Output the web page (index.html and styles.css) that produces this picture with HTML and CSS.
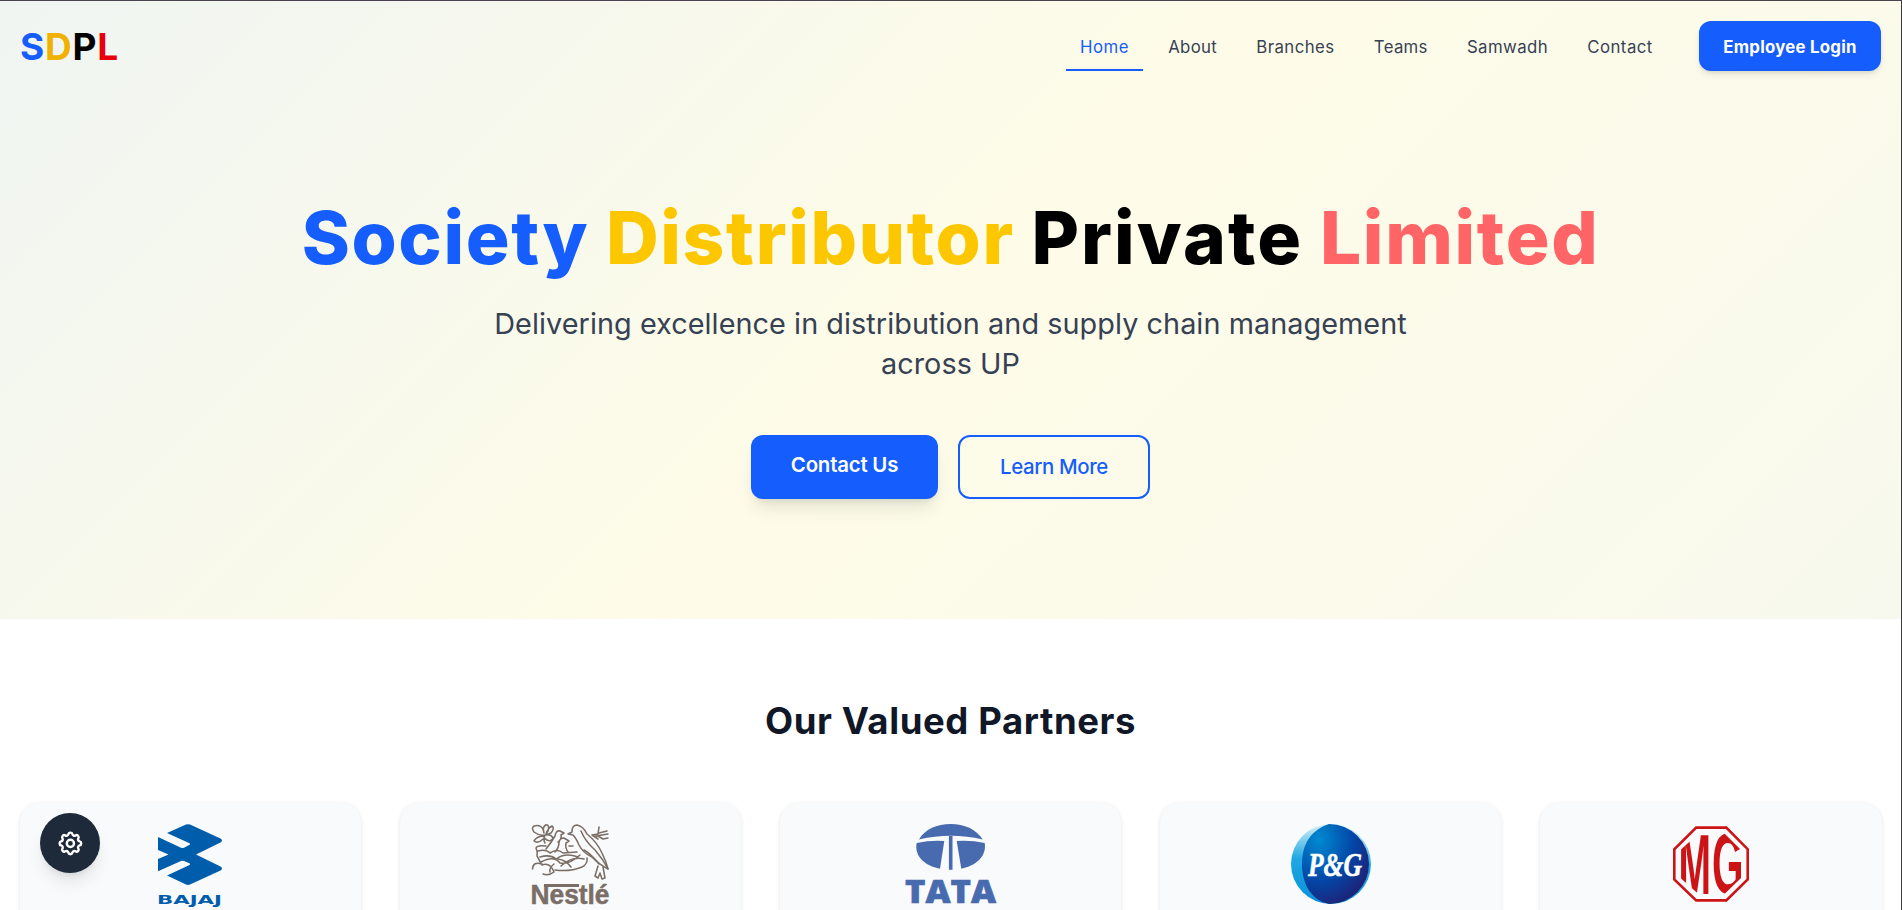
FILE: index.html
```html
<!DOCTYPE html>
<html lang="en">
<head>
<meta charset="utf-8">
<title>SDPL</title>
<link rel="stylesheet" href="styles.css">
</head>
<body>
<div class="page">
  <div class="hero">
    <header class="header">
      <a class="logo"><span class="blue">S</span><span class="gold">D</span><span class="black">P</span><span class="red">L</span></a>
      <nav class="nav">
        <a class="link home active">Home</a>
        <a class="link about">About</a>
        <a class="link branches">Branches</a>
        <a class="link teams">Teams</a>
        <a class="link samwadh">Samwadh</a>
        <a class="link contact">Contact</a>
        <a class="login">Employee Login</a>
      </nav>
    </header>
    <section class="intro">
      <h1 class="title"><span class="blue">Society</span> <span class="yellow">Distributor</span> <span class="black private">Private</span> <span class="coral">Limited</span></h1>
      <p class="tagline">Delivering excellence in distribution and supply chain management<br>across UP</p>
      <div class="actions">
        <a class="btn primary">Contact Us</a>
        <a class="btn outline">Learn More</a>
      </div>
    </section>
  </div>
  <section class="partners">
    <h2 class="heading">Our Valued Partners</h2>
    <div class="grid">
      <div class="card">
        <svg class="mark" width="64" height="80" viewBox="0 0 64 80" fill="#005dab">
          <path d="M9 9 28 .6Q30 -.3 32 .6L62.500 14.500Q65.500 16.500 62.500 18.500L38 30.500 62.500 42.500Q65.500 44.500 62.500 46.500L32 60.500Q30 61.300 28 60.500L9 51.500 31.500 41Q32.800 40 31.500 39.300L26 37Q24.500 36.500 23 37L0 47.300V35L10.500 30.500 0 26V13L23 23.700Q24.500 24.300 26 23.700L31.500 20.800Q32.800 20 31.500 19.200Z"/>
          <text class="bajaj" x="-1" y="79.700" textLength="65" lengthAdjust="spacingAndGlyphs">BAJAJ</text>
        </svg>
      </div>
      <div class="card">
        <svg class="mark" width="77" height="80" viewBox="0 0 77 80" fill="none" stroke="#7a6e66" stroke-width="1.550" stroke-linecap="round" stroke-linejoin="round">
          <path d="M13 19Q11 16 13 11Q7 12 2 8Q-1 4 2 2Q8 0 11 5L12 9Q10 3 14 .8Q18 1 16 7L14 10Q16 4 20 2Q23 4 19 9L14 11Q19 10 21 14Q19 18 15 16L12 14M12 12Q5 12 2 17Q6 20 11 15"/>
          <path d="M14 25Q19 19 23 12Q24 6 28 7L32 9 29 11Q30 15 26 18M23 28Q27 24 27 18Q28 14 32 14L37 17 34 19Q33 24 36 28M36 10 40 8Q40 1 45 1Q51 2 55 10Q65 18 70 29Q74 37 76 45Q68 41 60 33Q51 29 47 21Q44 14 41 11L36 10"/>
          <path d="M49 7Q53 17 63 26Q71 35 76 45M52 26Q59 30 67 40M66 42 63 52 66 54 68 49 70 55 73 54 71 43M66 15 60 11 66 10 67 3M64 12 76 10M66 12 71 15 76 14M67 9 75 7M37 22H41"/>
          <path d="M14 22Q5 21 4 24Q6 28 5 32Q7 35 9 40M6 27Q14 25 18 29Q25 24 31 29L45 28M8 33Q18 30 24 35Q33 28 46 33M9 38Q22 31 28 39Q37 41 48 31M10 40Q1 37 .5 45M10 41Q18 38 22 48Q17 52 11 50M22 40Q17 44 18 48M23 46Q38 48 50 43Q56 40 55 34M26 35Q34 36 39 43M29 42Q40 32 52 35"/>
          <path d="M12 61.500H47" stroke-width="3" stroke-linecap="butt"/>
          <text class="nestle" x="-1.500" y="79.500" textLength="79" lengthAdjust="spacingAndGlyphs" fill="#7a6e66">Nestlé</text>
        </svg>
      </div>
      <div class="card">
        <svg class="mark" width="91" height="80" viewBox="0 0 91 80" fill="#486aae">
          <path d="M14 15.500C20 5 32 0 45.700 0S71 5 77.700 15.500Q46 8 14 15.500Z"/>
          <path d="M11.700 19Q26 16 39.300 17L35 44.700C20 42 9 32 11.700 19ZM79.700 19Q66 16 51.700 17L56.300 44.700C71 42 82 32 79.700 19ZM43.900 12H47.500V45.700H43.900Z"/>
          <text class="tata" x="0" y="79.400" textLength="91" lengthAdjust="spacingAndGlyphs">TATA</text>
        </svg>
      </div>
      <div class="card">
        <svg class="mark" width="80" height="80" viewBox="0 0 80 80">
          <defs>
            <linearGradient id="rim" x1=".3" y1="0" x2=".2" y2="1"><stop offset="0" stop-color="#d7f0fb"/><stop offset=".45" stop-color="#1fa8e1"/><stop offset="1" stop-color="#0790d8"/></linearGradient>
            <radialGradient id="globe" cx=".25" cy=".2" r=".95"><stop offset="0" stop-color="#008ad2"/><stop offset=".55" stop-color="#0345a6"/><stop offset="1" stop-color="#25196b"/></radialGradient>
          </defs>
          <circle cx="40" cy="40" r="40" fill="url(#rim)"/>
          <path d="M38 0A40 40 0 1 1 38 80C20 76 11 60 11 40S20 6 38 0Z" fill="url(#globe)"/>
          <text class="pg" x="17" y="51.500" textLength="54" lengthAdjust="spacingAndGlyphs">P&amp;G</text>
        </svg>
      </div>
      <div class="card">
        <svg class="mark" width="80" height="80" viewBox="0 0 80 80" fill="#cc1417">
          <clipPath id="octagon"><path d="M28 9H53L71 27V53L53 70.500H28L9.500 54V26Z"/></clipPath>
          <path d="M25.200 3.600H55.300L76.700 25.200V55.500L55.300 76.400H25.200L3.300 55.500V25.200Z" fill="none" stroke="#cc1417" stroke-width="2.600"/>
          <g clip-path="url(#octagon)">
            <g transform="translate(0 70.300) scale(1 2.200)">
              <text class="mg" x="7.500" y="0" textLength="32.500" lengthAdjust="spacingAndGlyphs">M</text>
              <text class="mg" x="41" y="-.4" textLength="31.500" lengthAdjust="spacingAndGlyphs">G</text>
            </g>
          </g>
        </svg>
      </div>
    </div>
  </section>
  <button class="settings" aria-label="Settings">
    <svg width="28.800" height="28.800" viewBox="0 0 24 24" fill="none" stroke="#fff" stroke-width="2" stroke-linecap="round" stroke-linejoin="round">
      <path d="M10.325 4.317c.426-1.756 2.924-1.756 3.350 0a1.724 1.724 0 002.573 1.066c1.543-.94 3.310.826 2.370 2.370a1.724 1.724 0 001.065 2.572c1.756.426 1.756 2.924 0 3.350a1.724 1.724 0 00-1.066 2.573c.94 1.543-.826 3.310-2.370 2.370a1.724 1.724 0 00-2.572 1.065c-.426 1.756-2.924 1.756-3.350 0a1.724 1.724 0 00-2.573-1.066c-1.543.94-3.310-.826-2.370-2.370a1.724 1.724 0 00-1.065-2.572c-1.756-.426-1.756-2.924 0-3.350a1.724 1.724 0 001.066-2.573c-.94-1.543.826-3.310 2.370-2.370.996.608 2.296.07 2.572-1.065z"/>
      <path d="M15 12a3 3 0 11-6 0 3 3 0 016 0z"/>
    </svg>
  </button>
</div>
</body>
</html>
```
FILE: styles.css
```css
* { box-sizing: border-box; }
body { margin: 0; font-family: Inter, "Liberation Sans", sans-serif; background: #fff; overflow: hidden; }
.page { position: relative; height: 910px; overflow: hidden; border-top: 1px solid #4b4250; border-right: 1px solid #3a3a3d; }
.hero { height: 618px; background: linear-gradient(135deg, #f0f5f2 0%, #fefce8 50%, #f8f9ee 100%); }
.header { display: flex; align-items: center; justify-content: space-between; height: 90px; padding: 0 20px; }
.logo { padding-top: 2px; font-size: 37px; font-weight: 700; line-height: 46px; letter-spacing: .8px; }
.blue { color: #155dfc; }
.gold { color: #f0b100; }
.yellow { color: #fdc700; }
.black { color: #000; }
.red { color: #e7000b; }
.coral { color: #ff6467; }
.nav { display: flex; align-items: center; gap: 10.400px; }
.link { height: 50px; padding: 0 14.400px; line-height: 53px; font-size: 16.800px; color: #364153; }
.active { color: #155dfc; border-bottom: 2px solid #155dfc; }
.home { letter-spacing: .5px; }
.about { letter-spacing: .3px; }
.branches { letter-spacing: .450px; }
.teams { letter-spacing: .3px; }
.samwadh { letter-spacing: .4px; }
.contact { letter-spacing: .480px; }
.login { margin-left: 21.400px; width: 182px; height: 50px; line-height: 52px; text-align: center; border-radius: 12px; background: #155dfc; color: #fff; font-size: 16.800px; font-weight: 650; letter-spacing: .250px; box-shadow: 0 4px 7px -1px rgba(0,0,0,.1), 0 2px 5px -2px rgba(0,0,0,.1); }
.intro { display: flex; flex-direction: column; align-items: center; padding-top: 101px; }
.title { margin: 0; font-size: 73px; line-height: 91px; font-weight: 800; letter-spacing: 1.650px; word-spacing: -1px; white-space: nowrap; }
.private { letter-spacing: 2.100px; }
.tagline { margin: 21px 0 0; font-size: 28.800px; line-height: 40px; letter-spacing: .06px; color: #364153; text-align: center; }
.actions { display: flex; gap: 20px; margin-top: 51px; }
.btn { height: 64px; border-radius: 12px; text-align: center; font-size: 20.400px; font-weight: 600; }
.primary { width: 187px; line-height: 60px; letter-spacing: -.2px; background: #155dfc; color: #fff; box-shadow: 0 12px 18px -4px rgba(0,0,0,.1), 0 5px 7px -4px rgba(0,0,0,.1); }
.outline { width: 192px; line-height: 60px; letter-spacing: -.350px; border: 2px solid #155dfc; color: #155dfc; font-weight: 550; }
.partners { padding: 77px 19.500px 0; }
.heading { margin: 0; text-align: center; font-size: 36.500px; line-height: 50px; font-weight: 700; letter-spacing: .6px; color: #101828; }
.grid { display: grid; grid-template-columns: repeat(5, 1fr); gap: 38.400px; margin-top: 57px; }
.card { display: flex; justify-content: center; align-items: flex-start; height: 160px; padding-top: 21px; border-radius: 19px; background: #f9fafb; box-shadow: 0 1px 4px rgba(0,0,0,.1), 0 1px 2px -1px rgba(0,0,0,.1); }
.mark { display: block; overflow: visible; }
.bajaj { font: 700 12.300px "DejaVu Sans", sans-serif; }
.nestle { font: 700 27px "Liberation Sans", sans-serif; stroke-width: .5px; }
.tata { font: 800 31px "Open Sans", sans-serif; stroke: #486aae; stroke-width: .6px; }
.pg { font: italic 700 34px "Liberation Serif", serif; fill: #fff; stroke: #fff; stroke-width: .6px; }
.mg { font: 700 38.500px "Liberation Sans", sans-serif; }
.settings { position: absolute; left: 40px; top: 812px; width: 60px; height: 60px; padding: 0; border: 0; border-radius: 50%; background: #1e2939; display: flex; align-items: center; justify-content: center; box-shadow: 0 12px 18px -4px rgba(0,0,0,.1), 0 5px 7px -4px rgba(0,0,0,.1); }
```
